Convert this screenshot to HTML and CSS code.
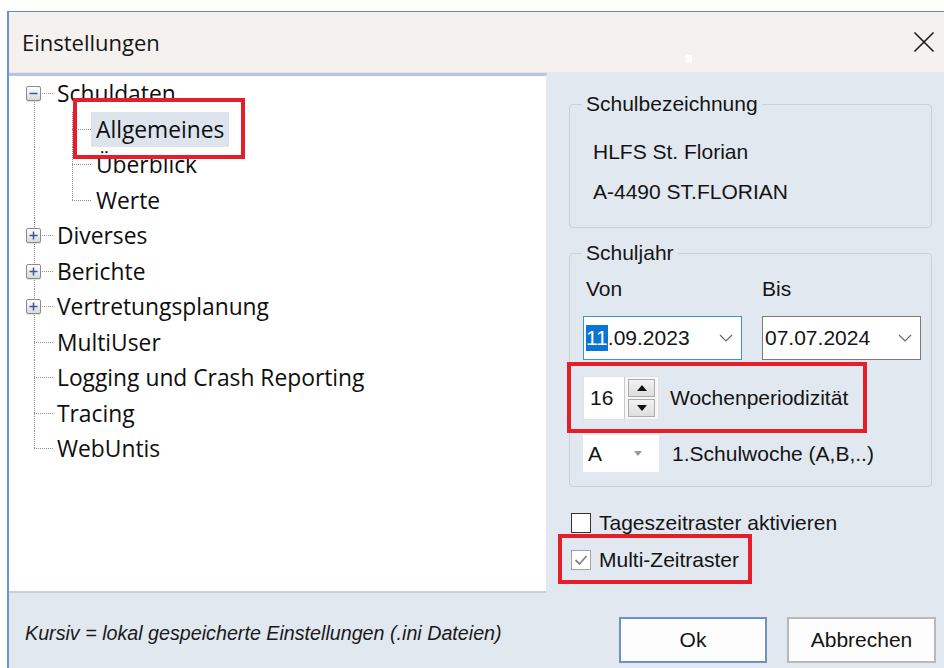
FILE: index.html
```html
<!DOCTYPE html>
<html lang="de">
<head>
<meta charset="utf-8">
<title>Einstellungen</title>
<link rel="stylesheet" href="styles.css">
</head>
<body>
<div class="window">
  <div class="titlebar">
    <span class="title">Einstellungen</span>
    <span class="grip"></span>
    <button class="close" aria-label="Schließen">
      <svg width="24" height="24" viewBox="0 0 24 24"><path d="M2.5 2.5 L21.5 21.5 M21.5 2.5 L2.5 21.5" stroke="#1b1b1b" stroke-width="1.6" fill="none"/></svg>
    </button>
  </div>

  <div class="content">
    <div class="tree">
      <div class="row">
        <span class="g g0 v-down h0"><span class="exp"><svg width="15" height="15" viewBox="0 0 15 15"><path d="M3.5 7.5 H11.5" stroke="#3a5a9a" stroke-width="1.5"/></svg></span></span>
        <span class="label">Schuldaten</span>
      </div>
      <div class="row">
        <span class="g g0 v-full"></span>
        <span class="g g1 v-full h1"></span>
        <span class="label sel">Allgemeines</span>
      </div>
      <div class="row">
        <span class="g g0 v-full"></span>
        <span class="g g1 v-full h1"></span>
        <span class="label sub">Überblick</span>
      </div>
      <div class="row">
        <span class="g g0 v-full"></span>
        <span class="g g1 v-up h1"></span>
        <span class="label sub">Werte</span>
      </div>
      <div class="row">
        <span class="g g0 v-full h0"><span class="exp"><svg width="15" height="15" viewBox="0 0 15 15"><path d="M3.5 7.5 H11.5 M7.5 3.5 V11.5" stroke="#3a5a9a" stroke-width="1.5"/></svg></span></span>
        <span class="label">Diverses</span>
      </div>
      <div class="row">
        <span class="g g0 v-full h0"><span class="exp"><svg width="15" height="15" viewBox="0 0 15 15"><path d="M3.5 7.5 H11.5 M7.5 3.5 V11.5" stroke="#3a5a9a" stroke-width="1.5"/></svg></span></span>
        <span class="label">Berichte</span>
      </div>
      <div class="row">
        <span class="g g0 v-full h0"><span class="exp"><svg width="15" height="15" viewBox="0 0 15 15"><path d="M3.5 7.5 H11.5 M7.5 3.5 V11.5" stroke="#3a5a9a" stroke-width="1.5"/></svg></span></span>
        <span class="label">Vertretungsplanung</span>
      </div>
      <div class="row">
        <span class="g g0 v-full h0"></span>
        <span class="label">MultiUser</span>
      </div>
      <div class="row">
        <span class="g g0 v-full h0"></span>
        <span class="label">Logging und Crash Reporting</span>
      </div>
      <div class="row">
        <span class="g g0 v-full h0"></span>
        <span class="label">Tracing</span>
      </div>
      <div class="row">
        <span class="g g0 v-up h0"></span>
        <span class="label">WebUntis</span>
      </div>
    </div>

    <div class="side">
      <fieldset class="group">
        <legend>Schulbezeichnung</legend>
        <div class="school">
          <div class="line">HLFS St. Florian</div>
          <div class="line">A-4490 ST.FLORIAN</div>
        </div>
      </fieldset>

      <fieldset class="group year">
        <legend>Schuljahr</legend>
        <div class="year-body">
          <div class="pair labels">
            <span class="von">Von</span>
            <span>Bis</span>
          </div>
          <div class="pair dates">
            <div class="datebox focused">
              <span class="dtext"><span class="hl">11</span>.09.2023</span>
              <svg class="chev" width="14" height="8" viewBox="0 0 14 8"><path d="M1 1 L7 7 L13 1" stroke="#6a6a6a" stroke-width="1.2" fill="none"/></svg>
            </div>
            <div class="datebox">
              <span class="dtext">07.07.2024</span>
              <svg class="chev" width="14" height="8" viewBox="0 0 14 8"><path d="M1 1 L7 7 L13 1" stroke="#6a6a6a" stroke-width="1.2" fill="none"/></svg>
            </div>
          </div>
          <div class="field-row spin-row">
            <div class="spinner">
              <span class="num">16</span>
              <span class="spin-btns">
                <span class="sbtn"><svg width="10" height="6" viewBox="0 0 10 6"><path d="M5 0 L10 6 H0 Z" fill="#111"/></svg></span>
                <span class="sbtn"><svg width="10" height="6" viewBox="0 0 10 6"><path d="M0 0 H10 L5 6 Z" fill="#111"/></svg></span>
              </span>
            </div>
            <span class="flabel">Wochenperiodizität</span>
          </div>
          <div class="field-row week-row">
            <div class="combo">
              <span>A</span>
              <svg width="8" height="5" viewBox="0 0 8 5"><path d="M0 0 H8 L4 5 Z" fill="#9a9a9a"/></svg>
            </div>
            <span class="flabel wk">1.Schulwoche (A,B,..)</span>
          </div>
        </div>
      </fieldset>

      <div class="checks">
        <label class="check"><span class="box"></span>Tageszeitraster aktivieren</label>
        <label class="check"><span class="box on"><svg width="14" height="12" viewBox="0 0 14 12"><path d="M1.5 6 L5.5 10 L12.5 2" stroke="#858585" stroke-width="1.8" fill="none"/></svg></span>Multi-Zeitraster</label>
      </div>
    </div>
  </div>

  <div class="footer">
    <span class="note">Kursiv = lokal gespeicherte Einstellungen (.ini Dateien)</span>
    <div class="buttons">
      <button class="btn default">Ok</button>
      <button class="btn">Abbrechen</button>
    </div>
  </div>
</div>

<div class="mark mark-tree"></div>
<div class="mark mark-spin"></div>
<div class="mark mark-check"></div>
</body>
</html>
```

FILE: styles.css
```css
* { box-sizing: border-box; }

html, body {
  margin: 0;
  padding: 0;
  background: #ffffff;
  width: 944px;
  height: 668px;
  overflow: hidden;
}

body {
  position: relative;
  font-family: "Liberation Sans", Arial, sans-serif;
  color: #141414;
}

/* dialog frame */
.window {
  margin: 11px 0 0 7px;
  border-top: 1px solid #5f8ad6;
  border-left: 2px solid #6b93d9;
  height: 657px;
  display: flex;
  flex-direction: column;
}

.titlebar {
  position: relative;
  height: 60px;
  flex: none;
  background: #f4f1ef;
  display: flex;
  align-items: center;
  justify-content: space-between;
  padding: 0 8px 0 13px;
}

.title {
  font-family: "Open Sans", "Noto Sans", sans-serif;
  font-size: 22px;
  color: #151515;
}

.grip {
  position: absolute;
  left: 677px;
  top: 43px;
  width: 6px;
  height: 8px;
  background: #ffffff;
}

.close {
  border: 0;
  background: transparent;
  padding: 0;
  width: 24px;
  height: 24px;
  display: flex;
}

/* main area: tree on the left, pages on the right */
.content {
  height: 521px;
  flex: none;
  display: flex;
  background: #e2e8f0;
}

.tree {
  width: 538px;
  flex: none;
  margin-top: 1px;
  background: #ffffff;
  border-top: 3px solid #b7c5dd;
  border-bottom: 2px solid #c6d0de;
  border-right: 1px solid #e4e9f0;
  font-family: "Open Sans", "Noto Sans", sans-serif;
  font-size: 22.8px;
  color: #0e0e0e;
}

.row {
  display: flex;
  align-items: center;
  height: 35.5px;
}

.g {
  align-self: stretch;
  flex: none;
  display: flex;
  align-items: center;
  background-repeat: no-repeat;
}

/* dotted connector lines */
.g0 { width: 46px; --x: 25px; }
.g1 { width: 36px; --x: 17px; }

.v-full {
  background-image: repeating-linear-gradient(to bottom, #8e8e8e 0 1px, transparent 1px 2px);
  background-size: 1px 100%;
  background-position: var(--x) 0;
}
.v-down {
  background-image: repeating-linear-gradient(to bottom, #8e8e8e 0 1px, transparent 1px 2px);
  background-size: 1px 50%;
  background-position: var(--x) 100%;
}
.v-up {
  background-image: repeating-linear-gradient(to bottom, #8e8e8e 0 1px, transparent 1px 2px);
  background-size: 1px 50%;
  background-position: var(--x) 0;
}

.v-full.h0, .v-down.h0, .v-up.h0,
.v-full.h1, .v-up.h1 {
  background-image:
    repeating-linear-gradient(to bottom, #8e8e8e 0 1px, transparent 1px 2px),
    repeating-linear-gradient(to right, #8e8e8e 0 1px, transparent 1px 2px);
  background-size: 1px 100%, 19px 1px;
  background-position: var(--x) 0, var(--x) 50%;
}
.v-down.h0 { background-size: 1px 50%, 19px 1px; background-position: var(--x) 100%, var(--x) 50%; }
.v-up.h0, .v-up.h1 { background-size: 1px 50%, 19px 1px; background-position: var(--x) 0, var(--x) 50%; }

.exp {
  margin-left: 17px;
  width: 15px;
  height: 15px;
  display: flex;
  border: 1px solid #8a8a8a;
  border-radius: 2px;
  background: linear-gradient(#ffffff, #d9d9d9);
  box-shadow: 0 1px 1px rgba(0, 0, 0, 0.12);
}
.exp svg { margin: -1px; }

.label {
  padding-left: 2px;
  white-space: nowrap;
  line-height: 35px;
}
.label.sub { padding-left: 5px; }
.label.sel {
  background: #dde4ee;
  padding: 0 5px;
  height: 35px;
}

/* right side pages */
.side {
  flex: 1;
  padding: 20px 12px 0 22px;
  display: flex;
  flex-direction: column;
  font-size: 21px;
}

.group {
  margin: 0;
  padding: 0;
  min-width: 0;
  border: 1px solid #ccd1d8;
  border-radius: 4px;
}

.group legend {
  margin-left: 12px;
  padding: 0 4px;
  line-height: 24px;
  font-size: 21px;
}

.school {
  padding: 16px 0 15px 23px;
}
.school .line {
  height: 40px;
  line-height: 40px;
}

.year { margin-top: 13px; }

.year-body {
  padding: 12px 0 14px 13px;
}

.pair {
  display: grid;
  grid-template-columns: 159px 159px;
  column-gap: 20px;
}

.labels { line-height: 24px; }
.labels .von { padding-left: 3px; }

.dates { margin-top: 15px; }

.datebox {
  height: 44px;
  background: #ffffff;
  border: 1px solid #7a7a7a;
  display: flex;
  align-items: center;
  justify-content: space-between;
  padding: 0 8px 0 2px;
}
.datebox.focused { border-color: #3f8fdc; padding-left: 2px; }

.dtext { line-height: 26px; }
.hl {
  background: #0a74d6;
  color: #ffffff;
  display: inline-block;
  line-height: 26px;
}

.field-row {
  display: flex;
  align-items: center;
}

.spin-row { margin-top: 16px; height: 44px; }

.spinner {
  width: 76px;
  height: 44px;
  background: #ffffff;
  border: 1px solid #e3e3e3;
  display: flex;
  align-items: center;
  justify-content: space-between;
}
.num { padding-left: 6px; }

.spin-btns {
  align-self: stretch;
  width: 34px;
  border-left: 1px solid #c9c9c9;
  display: flex;
  flex-direction: column;
  justify-content: center;
  gap: 2px;
  padding: 0 3px;
  background: #f7f7f7;
}
.sbtn {
  height: 18px;
  border: 1px solid #acacac;
  background: linear-gradient(#f2f2f2, #dedede);
  display: flex;
  align-items: center;
  justify-content: center;
}

.flabel { margin-left: 11px; }
.flabel.wk { margin-left: 13px; }

.week-row { margin-top: 15px; height: 37px; }

.combo {
  width: 76px;
  height: 37px;
  background: #ffffff;
  display: flex;
  align-items: center;
  justify-content: space-between;
  padding: 0 17px 0 5px;
}

.checks {
  margin-top: 26px;
  display: flex;
  flex-direction: column;
  gap: 17px;
}

.check {
  display: flex;
  align-items: center;
  height: 20px;
  gap: 8px;
  padding-left: 2px;
}

.box {
  width: 20px;
  height: 20px;
  border: 1px solid #333333;
  background: #ffffff;
  display: flex;
  align-items: center;
  justify-content: center;
}
.box.on { border-color: #a3a3a3; }

/* bottom bar */
.footer {
  flex: 1;
  display: flex;
  align-items: flex-start;
  padding: 24px 8px 0 16px;
  background: #e2e8f0;
}

.note {
  margin-top: 4px;
  line-height: 24px;
  font-style: italic;
  font-size: 19.7px;
  color: #1a1a1a;
}

.buttons {
  margin-left: auto;
  display: flex;
  gap: 20px;
}

.btn {
  width: 149px;
  height: 46px;
  font-family: "Liberation Sans", Arial, sans-serif;
  font-size: 21px;
  color: #141414;
  background: #fdfdfd;
  border: 2px solid #b9b9b9;
}
.btn.default { width: 148px; border-color: #7191c6; }

/* red call-out frames */
.mark {
  position: absolute;
  border: 4px solid #e61e2a;
}
.mark-tree { left: 73px; top: 98px; width: 172px; height: 61px; }
.mark-spin { left: 567px; top: 362px; width: 300px; height: 71px; }
.mark-check { left: 558px; top: 534px; width: 194px; height: 50px; }
```
